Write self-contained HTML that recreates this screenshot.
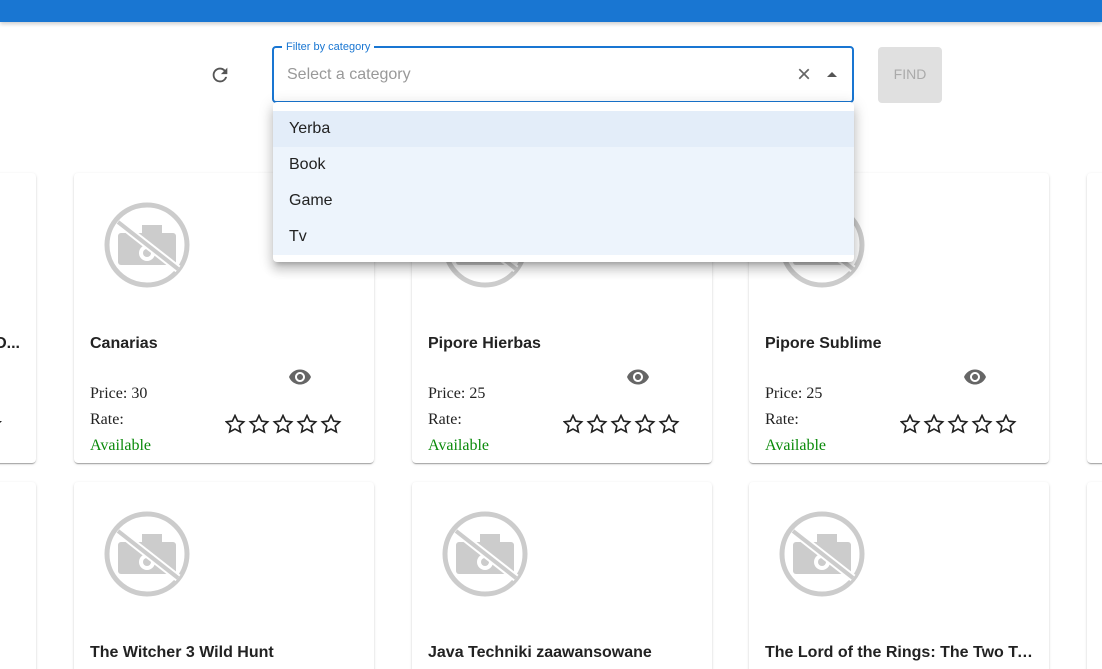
<!DOCTYPE html>
<html style="width:1102px;height:669px;overflow:hidden"><head><style>
body{margin:0;width:1102px;height:669px;overflow:hidden;background:#fff;font-family:"Liberation Sans",sans-serif;position:relative}
.bar{position:absolute;left:0;top:0;width:1102px;height:22px;background:#1976d2;box-shadow:0 2px 4px rgba(0,0,0,.2)}
.card{position:absolute;width:300px;height:290px;background:#fff;border-radius:4px;box-shadow:0 2px 1px -1px rgba(0,0,0,.2),0 1px 1px 0 rgba(0,0,0,.14),0 1px 3px 0 rgba(0,0,0,.12)}
.ic{position:absolute;left:28px;top:28px}
.t{position:absolute;left:16px;top:162px;font-weight:bold;font-size:16px;color:#222;white-space:nowrap;width:268px;overflow:hidden;text-overflow:ellipsis}
.s{position:absolute;left:16px;font-family:"Liberation Serif",serif;font-size:16px;color:#222}
.eye{position:absolute;left:214px;top:192px}
.stars{position:absolute;left:151px;top:241px}
.menu{position:absolute;left:273px;top:102px;width:581px;height:160px;background:#fff;border-radius:4px;box-shadow:0 5px 5px -3px rgba(0,0,0,.2),0 8px 10px 1px rgba(0,0,0,.14),0 3px 14px 2px rgba(0,0,0,.12);z-index:5}
.it{position:absolute;left:0;width:581px;height:36px;line-height:36px;padding-left:16px;box-sizing:border-box;font-size:16px;color:#222;background:#edf4fc}
</style></head><body>
<svg width="0" height="0" style="position:absolute"><defs><g id="st"><path d="M10 1.5l2.6 5.6 6.1.7-4.5 4.2 1.2 6-5.4-3-5.4 3 1.2-6L1.3 7.8l6.1-.7z" fill="none" stroke="#222" stroke-width="1.6" stroke-linejoin="miter"/></g><g id="stars"><use href="#st" x="0"/><use href="#st" x="24"/><use href="#st" x="48"/><use href="#st" x="72"/><use href="#st" x="96"/></g></defs></svg>
<div class="bar"></div>
<svg style="position:absolute;left:209px;top:64px" width="22" height="22" viewBox="0 0 24 24"><path fill="#555" d="M17.65 6.35A7.958 7.958 0 0 0 12 4c-4.42 0-7.99 3.58-7.99 8s3.57 8 7.990 8c3.73 0 6.84-2.55 7.73-6h-2.08A5.99 5.99 0 0 1 12 18c-3.31 0-6-2.69-6-6s2.69-6 6-6c1.66 0 3.14.69 4.22 1.78L13 11h7V4l-2.35 2.35z"/></svg>
<div style="position:absolute;left:272px;top:46px;width:578px;height:53px;border:2px solid #1976d2;border-radius:4px"></div>
<div style="position:absolute;left:282px;top:41px;background:#fff;padding:0 4px;font-size:11px;color:#1976d2">Filter by category</div>
<div style="position:absolute;left:287px;top:66px;font-size:16px;color:#999">Select a category</div>
<div style="position:absolute;left:797px;top:61px;font-size:24px;color:#666">×</div>
<div style="position:absolute;left:827px;top:72px;width:0;height:0;border-left:5px solid transparent;border-right:5px solid transparent;border-bottom:5px solid #555"></div>
<div style="position:absolute;left:878px;top:47px;width:64px;height:56px;background:#e0e0e0;border-radius:4px;color:#aaa;font-size:14px;text-align:center;line-height:54px">FIND</div>
<div class="menu">
<div class="it" style="top:9px;background:#e3edf9">Yerba</div>
<div class="it" style="top:45px">Book</div>
<div class="it" style="top:81px">Game</div>
<div class="it" style="top:117px">Tv</div>
</div>

<div class="card" style="left:-264px;top:173px"><div class="t" style="left:0;width:284px;text-align:right;direction:rtl">...O</div><div style="position:absolute;left:256px;top:248px;width:0;height:0;border-left:5px solid transparent;border-right:5px solid transparent;border-top:5px solid #222"></div></div>
<div class="card" style="left:1087px;top:173px"></div>
<div class="card" style="left:-264px;top:482px"></div>
<div class="card" style="left:1087px;top:482px"></div>

<div class="card" style="left:74px;top:173px">
<svg class="ic" width="90" height="90" viewBox="0 0 90 90"><circle cx="45" cy="44" r="40" fill="none" stroke="#ccc" stroke-width="5"/><rect x="16" y="32" width="58" height="32" rx="3" fill="#ccc"/><rect x="40" y="24" width="20" height="10" fill="#ccc"/><circle cx="45" cy="52" r="8" fill="#fff"/><circle cx="45" cy="52" r="4" fill="#ccc"/><line x1="16" y1="21" x2="76" y2="68" stroke="#fff" stroke-width="8"/><line x1="16" y1="21" x2="76" y2="68" stroke="#ccc" stroke-width="4"/></svg>
<div class="t">Canarias</div><svg class="eye" width="24" height="24" viewBox="0 0 24 24"><path fill="#666" d="M12 4.5C7 4.5 2.73 7.61 1 12c1.73 4.39 6 7.5 11 7.5s9.27-3.11 11-7.5c-1.73-4.39-6-7.5-11-7.5zM12 17c-2.76 0-5-2.24-5-5s2.24-5 5-5 5 2.24 5 5-2.24 5-5 5zm0-8c-1.66 0-3 1.34-3 3s1.34 3 3 3 3-1.34 3-3-1.34-3-3-3z"/></svg>
<div class="s" style="top:212px">Price: 30</div><div class="s" style="top:238px">Rate:</div><div class="s" style="top:264px;color:#0a8a0a">Available</div><svg class="stars" width="120" height="22"><use href="#stars"/></svg></div>

<div class="card" style="left:412px;top:173px">
<svg class="ic" width="90" height="90" viewBox="0 0 90 90"><circle cx="45" cy="44" r="40" fill="none" stroke="#ccc" stroke-width="5"/><rect x="16" y="32" width="58" height="32" rx="3" fill="#ccc"/><rect x="40" y="24" width="20" height="10" fill="#ccc"/><circle cx="45" cy="52" r="8" fill="#fff"/><circle cx="45" cy="52" r="4" fill="#ccc"/><line x1="16" y1="21" x2="76" y2="68" stroke="#fff" stroke-width="8"/><line x1="16" y1="21" x2="76" y2="68" stroke="#ccc" stroke-width="4"/></svg>
<div class="t">Pipore Hierbas</div><svg class="eye" width="24" height="24" viewBox="0 0 24 24"><path fill="#666" d="M12 4.5C7 4.5 2.73 7.61 1 12c1.73 4.39 6 7.5 11 7.5s9.27-3.11 11-7.5c-1.73-4.39-6-7.5-11-7.5zM12 17c-2.76 0-5-2.24-5-5s2.24-5 5-5 5 2.24 5 5-2.24 5-5 5zm0-8c-1.66 0-3 1.34-3 3s1.34 3 3 3 3-1.34 3-3-1.34-3-3-3z"/></svg>
<div class="s" style="top:212px">Price: 25</div><div class="s" style="top:238px">Rate:</div><div class="s" style="top:264px;color:#0a8a0a">Available</div><svg class="stars" width="120" height="22"><use href="#stars"/></svg></div>

<div class="card" style="left:749px;top:173px">
<svg class="ic" width="90" height="90" viewBox="0 0 90 90"><circle cx="45" cy="44" r="40" fill="none" stroke="#ccc" stroke-width="5"/><rect x="16" y="32" width="58" height="32" rx="3" fill="#ccc"/><rect x="40" y="24" width="20" height="10" fill="#ccc"/><circle cx="45" cy="52" r="8" fill="#fff"/><circle cx="45" cy="52" r="4" fill="#ccc"/><line x1="16" y1="21" x2="76" y2="68" stroke="#fff" stroke-width="8"/><line x1="16" y1="21" x2="76" y2="68" stroke="#ccc" stroke-width="4"/></svg>
<div class="t">Pipore Sublime</div><svg class="eye" width="24" height="24" viewBox="0 0 24 24"><path fill="#666" d="M12 4.5C7 4.5 2.73 7.61 1 12c1.73 4.39 6 7.5 11 7.5s9.27-3.11 11-7.5c-1.73-4.39-6-7.5-11-7.5zM12 17c-2.76 0-5-2.24-5-5s2.24-5 5-5 5 2.24 5 5-2.24 5-5 5zm0-8c-1.66 0-3 1.34-3 3s1.34 3 3 3 3-1.34 3-3-1.34-3-3-3z"/></svg>
<div class="s" style="top:212px">Price: 25</div><div class="s" style="top:238px">Rate:</div><div class="s" style="top:264px;color:#0a8a0a">Available</div><svg class="stars" width="120" height="22"><use href="#stars"/></svg></div>

<div class="card" style="left:74px;top:482px">
<svg class="ic" width="90" height="90" viewBox="0 0 90 90"><circle cx="45" cy="44" r="40" fill="none" stroke="#ccc" stroke-width="5"/><rect x="16" y="32" width="58" height="32" rx="3" fill="#ccc"/><rect x="40" y="24" width="20" height="10" fill="#ccc"/><circle cx="45" cy="52" r="8" fill="#fff"/><circle cx="45" cy="52" r="4" fill="#ccc"/><line x1="16" y1="21" x2="76" y2="68" stroke="#fff" stroke-width="8"/><line x1="16" y1="21" x2="76" y2="68" stroke="#ccc" stroke-width="4"/></svg>
<div class="t">The Witcher 3 Wild Hunt</div></div>
<div class="card" style="left:412px;top:482px">
<svg class="ic" width="90" height="90" viewBox="0 0 90 90"><circle cx="45" cy="44" r="40" fill="none" stroke="#ccc" stroke-width="5"/><rect x="16" y="32" width="58" height="32" rx="3" fill="#ccc"/><rect x="40" y="24" width="20" height="10" fill="#ccc"/><circle cx="45" cy="52" r="8" fill="#fff"/><circle cx="45" cy="52" r="4" fill="#ccc"/><line x1="16" y1="21" x2="76" y2="68" stroke="#fff" stroke-width="8"/><line x1="16" y1="21" x2="76" y2="68" stroke="#ccc" stroke-width="4"/></svg>
<div class="t">Java Techniki zaawansowane</div></div>
<div class="card" style="left:749px;top:482px">
<svg class="ic" width="90" height="90" viewBox="0 0 90 90"><circle cx="45" cy="44" r="40" fill="none" stroke="#ccc" stroke-width="5"/><rect x="16" y="32" width="58" height="32" rx="3" fill="#ccc"/><rect x="40" y="24" width="20" height="10" fill="#ccc"/><circle cx="45" cy="52" r="8" fill="#fff"/><circle cx="45" cy="52" r="4" fill="#ccc"/><line x1="16" y1="21" x2="76" y2="68" stroke="#fff" stroke-width="8"/><line x1="16" y1="21" x2="76" y2="68" stroke="#ccc" stroke-width="4"/></svg>
<div class="t">The Lord of the Rings: The Two Towers</div></div>
</body></html>
